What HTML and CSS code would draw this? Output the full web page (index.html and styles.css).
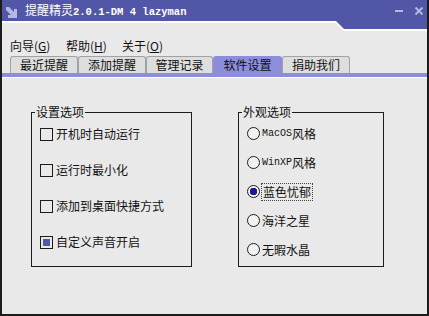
FILE: index.html
```html
<!DOCTYPE html>
<html lang="zh-CN">
<head>
    <meta charset="UTF-8">
    <meta name="viewport" content="width=device-width, initial-scale=1.0">
    <title>提醒精灵</title>
    <link rel="stylesheet" href="styles.css">
</head>
<body>
    <div class="window">
        <div class="titlebar">
            <svg class="app-icon" width="11" height="11" viewBox="0 0 11 11">
                <polygon points="0,0 3,0 8,5 8,2 11,2 11,11 2,11 2,8 5,8 0,3" fill="#b4b8e2"/>
            </svg>
            <span class="title">提醒精灵<span class="mono">2.0.1-DM 4 lazyman</span></span>
            <span class="controls">
                <span class="btn-min"></span>
                <svg class="btn-close" width="8" height="8" viewBox="0 0 8 8">
                    <path d="M0.5 0.5 L7.5 7.5 M7.5 0.5 L0.5 7.5" stroke="#b4b8e2" stroke-width="2"/>
                </svg>
            </span>
        </div>

        <div class="menubar">
            <span class="menu-item">向导(<u>G</u>)</span>
            <span class="menu-item">帮助(<u>H</u>)</span>
            <span class="menu-item">关于(<u>O</u>)</span>
        </div>

        <div class="tabs">
            <div class="tab">最近提醒</div>
            <div class="tab">添加提醒</div>
            <div class="tab narrow">管理记录</div>
            <div class="tab active">软件设置</div>
            <div class="tab">捐助我们</div>
        </div>
        <div class="tab-rule"></div>

        <div class="panel">
            <fieldset class="group group-settings">
                <legend>设置选项</legend>
                <ul class="options checks">
                    <li><span class="check"></span>开机时自动运行</li>
                    <li><span class="check"></span>运行时最小化</li>
                    <li><span class="check"></span>添加到桌面快捷方式</li>
                    <li><span class="check checked"></span>自定义声音开启</li>
                </ul>
            </fieldset>

            <fieldset class="group group-skin">
                <legend>外观选项</legend>
                <ul class="options radios">
                    <li><span class="radio"></span><span class="mono">MacOS</span>风格</li>
                    <li><span class="radio"></span><span class="mono">WinXP</span>风格</li>
                    <li><span class="radio selected"></span><span class="focus">蓝色忧郁</span></li>
                    <li><span class="radio"></span>海洋之星</li>
                    <li><span class="radio"></span>无暇水晶</li>
                </ul>
            </fieldset>
        </div>
    </div>
</body>
</html>
```

FILE: styles.css
```css
body {
    margin: 0;
    font-family: "Noto Sans CJK SC", "Noto Sans", sans-serif;
    font-size: 12px;
    color: #111;
}
.window {
    position: relative;
    width: 429px;
    height: 316px;
    box-sizing: border-box;
    border: 2px solid #1c1c1c;
    border-top: 0;
    background: #e9e9e9;
}
.titlebar {
    position: relative;
    display: flex;
    align-items: center;
    height: 21px;
    background: #5256a6;
    border-bottom: 2px solid #fff;
    color: #fff;
}
/* notch on the right side of the title bar */
.titlebar::before,
.titlebar::after {
    content: "";
    position: absolute;
    top: 21px;
    left: 334px;
    right: 0;
}
.titlebar::before {
    height: 10px;
    background: #fff;
    clip-path: polygon(0 0, 100% 0, 100% 10px, 8px 10px, 0 2px);
}
.titlebar::after {
    height: 8px;
    background: #5256a6;
    clip-path: polygon(0 0, 100% 0, 100% 8px, 8px 8px);
}
.app-icon {
    margin-left: 4px;
    margin-top: 4px;
}
.title {
    margin-left: 8px;
    font-size: 12px;
    line-height: 16px;
}
.title .mono {
    font-size: 10.5px;
    font-weight: bold;
}
.mono {
    font-family: "Liberation Mono", monospace;
}
.controls {
    display: flex;
    align-items: center;
    margin-left: auto;
    padding-right: 4px;
    gap: 12px;
}
.btn-min {
    width: 8px;
    height: 2px;
    background: #b4b8e2;
}
.menubar {
    display: flex;
    height: 33px;
    box-sizing: border-box;
    padding: 15px 0 0 8px;
    line-height: 16px;
}
.menu-item {
    width: 56px;
}
.menu-item u {
    text-underline-offset: 1px;
}
.tabs {
    display: flex;
    padding-left: 8px;
    height: 17px;
}
.tab {
    width: 68px;
    box-sizing: border-box;
    border: 1px solid #a2a2a2;
    border-bottom: 0;
    border-radius: 3px 3px 0 0;
    background: #dedede;
    text-align: center;
    line-height: 16px;
}
.tab.narrow {
    width: 67px;
}
.tab.active {
    width: 69px;
    background: #8c8edc;
    border-color: #8c8edc;
}
.tab-rule {
    height: 4px;
    background: #8c8edc;
    border-bottom: 1px solid #fff;
}
.panel {
    display: flex;
    gap: 46px;
    padding: 27px 0 0 29px;
}
.group {
    margin: 0;
    padding: 0;
    min-width: 0;
    height: 162px;
    box-sizing: border-box;
    border: 1px solid #1c1c1c;
}
.group-settings {
    width: 161px;
}
.group-skin {
    width: 146px;
}
.group legend {
    margin-left: 3px;
    padding: 0 1px;
    line-height: 14px;
}
.options {
    list-style: none;
    margin: 0;
    padding: 0 0 0 8px;
}
.options li {
    display: flex;
    align-items: center;
    line-height: 16px;
}
.checks {
    margin-top: -3px;
}
.checks li {
    height: 36px;
}
.radios li {
    height: 29px;
}
.check {
    width: 13px;
    height: 13px;
    box-sizing: border-box;
    border: 1px solid #1c1c1c;
    margin-right: 3px;
}
.check.checked {
    background: #5258a8;
    box-shadow: inset 0 0 0 2px #e9e9e9;
}
.radio {
    width: 13px;
    height: 13px;
    box-sizing: border-box;
    border: 1px solid #1c1c1c;
    border-radius: 50%;
    background: #f2f2f2;
    margin-right: 2px;
}
.radio.selected {
    background: radial-gradient(circle, #1a1a8c 3.5px, #f2f2f2 4px);
}
.radios .mono {
    font-size: 10px;
}
.focus {
    outline: 1px dotted #444;
    padding: 0 1px;
}
```
